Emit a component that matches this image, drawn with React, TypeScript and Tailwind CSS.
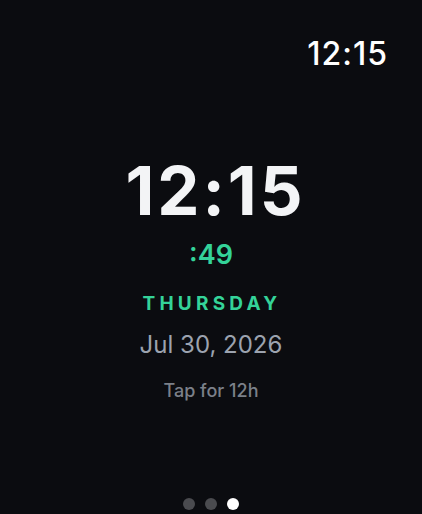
import React from "react";

export default function App() {
  return (
    <div
      className="w-[422px] h-[514px] bg-[#0b0c10] flex flex-col overflow-hidden"
      style={{ fontFamily: "Inter, 'Noto Sans', sans-serif" }}
    >
      <div className="flex justify-end pr-[34px] pt-[38px]">
        <span className="text-[32px] font-medium text-white leading-none tracking-[1px]">12:15</span>
      </div>
      <div className="flex flex-col items-center mt-[87px]">
        <div className="text-[67px] font-bold text-[#f3f4f6] leading-none tracking-[3px] pl-[9px]">12:15</div>
        <div className="mt-[17px] text-[27px] font-semibold text-[#34d399] leading-none">:49</div>
        <div className="mt-[26px] text-[19px] font-bold text-[#34d399] leading-none tracking-[4.2px] pl-[2px]">THURSDAY</div>
        <div className="mt-[20px] text-[24px] text-[#9ca3af] leading-none">Jul 30, 2026</div>
        <div className="mt-[25px] text-[18px] font-medium text-[#7b8089] leading-none">Tap for 12h</div>
      </div>
      <div className="flex-1" />
      <div className="flex justify-center gap-[10px] pb-[4px]">
        <span className="w-[12px] h-[12px] rounded-full bg-[#4a4b4f]" />
        <span className="w-[12px] h-[12px] rounded-full bg-[#4a4b4f]" />
        <span className="w-[12px] h-[12px] rounded-full bg-white" />
      </div>
    </div>
  );
}
